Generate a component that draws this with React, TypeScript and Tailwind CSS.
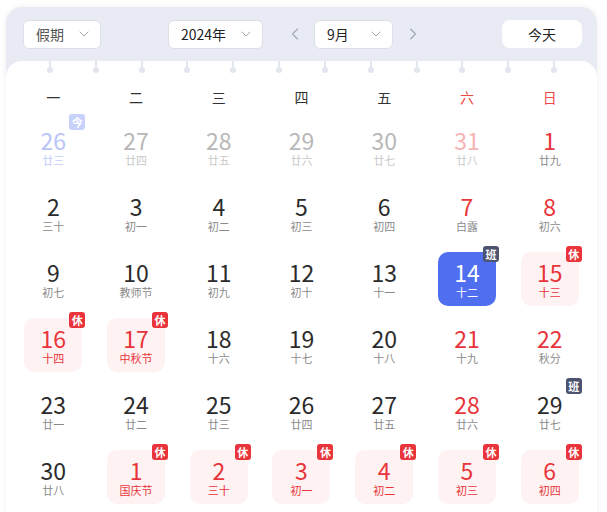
import { ChevronDown, ChevronLeft, ChevronRight } from "lucide-react";

type Day = {
    d: number;
    lunar: string;
    kind?: "prev" | "today" | "prevWeekend" | "weekend" | "selected" | "rest";
    badge?: "休" | "班" | "今";
};

const weeks: Day[][] = [
    [
        { d: 26, lunar: "廿三", kind: "today", badge: "今" },
        { d: 27, lunar: "廿四", kind: "prev" },
        { d: 28, lunar: "廿五", kind: "prev" },
        { d: 29, lunar: "廿六", kind: "prev" },
        { d: 30, lunar: "廿七", kind: "prev" },
        { d: 31, lunar: "廿八", kind: "prevWeekend" },
        { d: 1, lunar: "廿九", kind: "weekend" },
    ],
    [
        { d: 2, lunar: "三十" },
        { d: 3, lunar: "初一" },
        { d: 4, lunar: "初二" },
        { d: 5, lunar: "初三" },
        { d: 6, lunar: "初四" },
        { d: 7, lunar: "白露", kind: "weekend" },
        { d: 8, lunar: "初六", kind: "weekend" },
    ],
    [
        { d: 9, lunar: "初七" },
        { d: 10, lunar: "教师节" },
        { d: 11, lunar: "初九" },
        { d: 12, lunar: "初十" },
        { d: 13, lunar: "十一" },
        { d: 14, lunar: "十二", kind: "selected", badge: "班" },
        { d: 15, lunar: "十三", kind: "rest", badge: "休" },
    ],
    [
        { d: 16, lunar: "十四", kind: "rest", badge: "休" },
        { d: 17, lunar: "中秋节", kind: "rest", badge: "休" },
        { d: 18, lunar: "十六" },
        { d: 19, lunar: "十七" },
        { d: 20, lunar: "十八" },
        { d: 21, lunar: "十九", kind: "weekend" },
        { d: 22, lunar: "秋分", kind: "weekend" },
    ],
    [
        { d: 23, lunar: "廿一" },
        { d: 24, lunar: "廿二" },
        { d: 25, lunar: "廿三" },
        { d: 26, lunar: "廿四" },
        { d: 27, lunar: "廿五" },
        { d: 28, lunar: "廿六", kind: "weekend" },
        { d: 29, lunar: "廿七", badge: "班" },
    ],
    [
        { d: 30, lunar: "廿八" },
        { d: 1, lunar: "国庆节", kind: "rest", badge: "休" },
        { d: 2, lunar: "三十", kind: "rest", badge: "休" },
        { d: 3, lunar: "初一", kind: "rest", badge: "休" },
        { d: 4, lunar: "初二", kind: "rest", badge: "休" },
        { d: 5, lunar: "初三", kind: "rest", badge: "休" },
        { d: 6, lunar: "初四", kind: "rest", badge: "休" },
    ],
];

const weekdays = ["一", "二", "三", "四", "五", "六", "日"];

const Select = ({ label, width, ml, color }: { label: string; width: string; ml: string; color: string }) => (
    <div
        className={`${width} ${ml} h-[29px] flex items-center justify-between pl-[12px] pr-[8px] bg-white rounded-[6px] border border-[#dcdfe6] text-[14px] ${color}`}
    >
        <span>{label}</span>
        <ChevronDown size={16} strokeWidth={1.2} className="text-[#8a8f99]" />
    </div>
);

const badgeColor: Record<string, string> = {
    "休": "bg-[#e8343a]",
    "班": "bg-[#4b5370]",
    "今": "bg-[#c7d1fb]",
};

const DayCell = ({ day }: { day: Day }) => {
    let box = "";
    let num = "text-[#2b2b2b]";
    let lunar = "text-[#8a8a8a]";
    switch (day.kind) {
        case "prev":
            num = "text-[#b8b8b8]";
            lunar = "text-[#c9c9c9]";
            break;
        case "today":
            num = "text-[#b9c4f6]";
            lunar = "text-[#c4cdf8]";
            break;
        case "prevWeekend":
            num = "text-[#f5b3b3]";
            lunar = "text-[#c9c9c9]";
            break;
        case "weekend":
            num = "text-[#e8343a]";
            break;
        case "selected":
            box = "bg-[#4f6ef0]";
            num = "text-white";
            lunar = "text-white";
            break;
        case "rest":
            box = "bg-[#fef3f2]";
            num = "text-[#e8343a]";
            lunar = "text-[#e8343a]";
            break;
    }

    return (
        <div className="h-[66px] flex justify-center">
            <div className={`relative w-[58px] h-[54px] rounded-[10px] flex flex-col items-center pt-[8px] ${box}`}>
                <span className={`text-[23px] leading-[24px] ${num}`}>{day.d}</span>
                <span className={`text-[11px] leading-[13px] mt-[2px] ${lunar}`}>{day.lunar}</span>
                {day.badge && (
                    <span
                        className={`absolute -top-[6px] -right-[3px] w-[16px] h-[16px] rounded-[3px] flex items-center justify-center text-[11px] font-bold text-white leading-none ${badgeColor[day.badge]}`}
                    >
                        {day.badge}
                    </span>
                )}
            </div>
        </div>
    );
};

export default function App() {
    return (
        <div className="min-h-screen bg-white pt-[7px] font-['Noto_Sans_CJK_SC','Noto_Sans',sans-serif]">
            <div className="ml-[6px] w-[591px] rounded-t-[16px] bg-[#e8ebf3] shadow-[0_0_6px_rgba(0,0,0,0.07)]">
                {/* Toolbar */}
                <div className="h-[54px] flex items-center pl-[17px] pr-[15px]">
                    <Select label="假期" width="w-[78px]" ml="" color="text-[#555]" />
                    <Select label="2024年" width="w-[95px]" ml="ml-[67px]" color="text-[#222]" />
                    <button className="ml-[22px] w-[20px] flex justify-center text-[#a3a7b0]">
                        <ChevronLeft size={20} strokeWidth={1.3} />
                    </button>
                    <Select label="9月" width="w-[79px]" ml="ml-[9px]" color="text-[#222]" />
                    <button className="ml-[10px] w-[20px] flex justify-center text-[#a3a7b0]">
                        <ChevronRight size={20} strokeWidth={1.3} />
                    </button>
                    <button className="ml-auto w-[80px] h-[28px] rounded-[8px] bg-white text-[14px] text-[#222]">
                        今天
                    </button>
                </div>

                {/* Calendar body */}
                <div className="bg-white rounded-t-[16px] pb-[10px]">
                    <div className="flex justify-between pl-[41px] pr-[40px]">
                        {Array.from({ length: 12 }).map((_, i) => (
                            <div key={i} className="w-[6px] h-[12px] flex flex-col items-center">
                                <div className="w-[2px] h-[6px] bg-[#e3e6ee]" />
                                <div className="w-[6px] h-[6px] rounded-full bg-[#e3e6ee]" />
                            </div>
                        ))}
                    </div>

                    <div className="grid grid-cols-7 px-[6px] mt-[12px] h-[24px] items-center">
                        {weekdays.map((w, i) => (
                            <div
                                key={w}
                                className={`text-center text-[14px] ${i >= 5 ? "text-[#f04848]" : "text-[#333]"}`}
                            >
                                {w}
                            </div>
                        ))}
                    </div>

                    <div className="grid grid-cols-7 px-[6px] mt-[11px]">
                        {weeks.flat().map((day, i) => (
                            <DayCell key={i} day={day} />
                        ))}
                    </div>
                </div>
            </div>
        </div>
    );
}
